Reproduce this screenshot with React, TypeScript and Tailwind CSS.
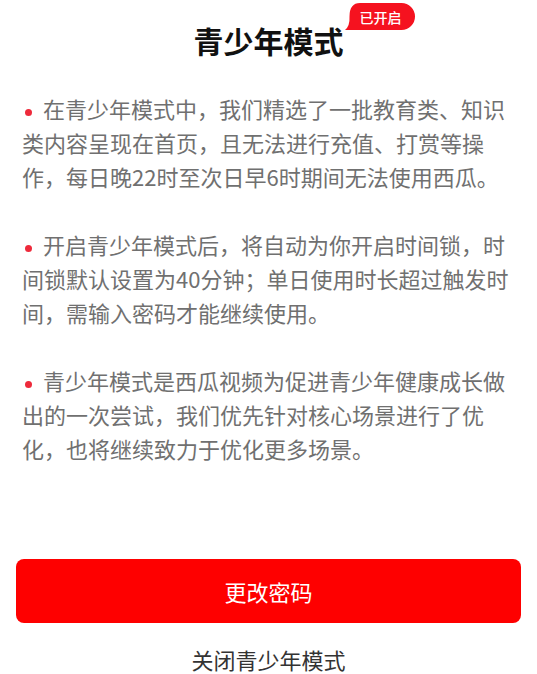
import React from "react";

const FONT = { fontFamily: '"Noto Sans CJK SC", "Noto Sans", sans-serif' };

const ITEMS = [
  "在青少年模式中，我们精选了一批教育类、知识类内容呈现在首页，且无法进行充值、打赏等操作，每日晚22时至次日早6时期间无法使用西瓜。",
  "开启青少年模式后，将自动为你开启时间锁，时间锁默认设置为40分钟；单日使用时长超过触发时间，需输入密码才能继续使用。",
  "青少年模式是西瓜视频为促进青少年健康成长做出的一次尝试，我们优先针对核心场景进行了优化，也将继续致力于优化更多场景。",
];

function Badge() {
  return (
    <span className="absolute left-full top-[-17px] ml-[1px] block h-[27px] w-[70px]">
      <svg width="70" height="27" viewBox="0 0 70 27" className="absolute inset-0">
        <path d="M15 0 H56.5 A13.5 13.5 0 0 1 56.5 27 H0 Q5 23 4.5 13.5 Q4.5 0 15 0 Z" fill="#f5121f" />
      </svg>
      <span className="relative flex h-full items-center justify-center pl-[2px] text-[14px] font-medium leading-none text-white">
        已开启
      </span>
    </span>
  );
}

export default function App() {
  return (
    <div style={FONT} className="flex h-[674px] w-[537px] flex-col bg-white">
      <div className="flex justify-center pt-[20px]">
        <h1 className="relative text-[30px] font-semibold leading-[40px] text-[#111]">
          青少年模式
          <Badge />
        </h1>
      </div>

      <div className="mt-[31px] flex flex-col gap-[34px] px-[22px]">
        {ITEMS.map((t, i) => (
          <p key={i} className="text-[22px] leading-[34px] text-[#707070]">
            <span className="ml-[3px] mr-[11px] inline-block h-[7px] w-[7px] rounded-full bg-[#ee2a3b] align-middle" />
            {t}
          </p>
        ))}
      </div>

      <button className="mx-[16px] mt-[94px] h-[65px] rounded-[8px] bg-[#fe0000] text-[22px] text-white">
        更改密码
      </button>
      <div className="mt-[21px] text-center text-[22px] leading-[30px] text-[#333]">关闭青少年模式</div>
    </div>
  );
}
